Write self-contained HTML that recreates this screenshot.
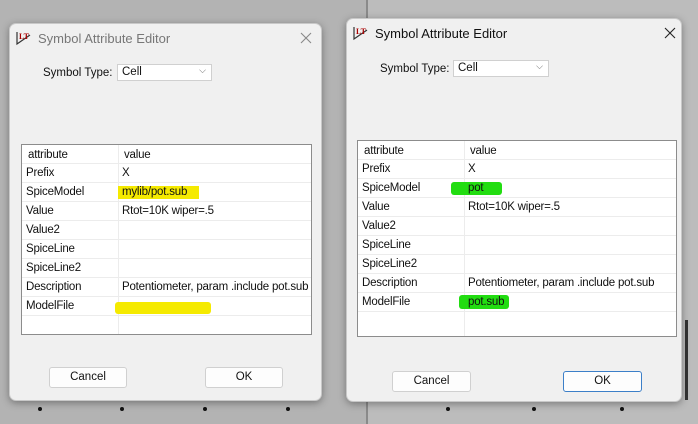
<!DOCTYPE html>
<html><head><meta charset="utf-8"><style>
*{margin:0;padding:0;box-sizing:border-box}
body{width:698px;height:424px;background:#b3b3b3;position:relative;overflow:hidden;font-family:"Liberation Sans",sans-serif;font-size:11.5px;color:#111}
.a{position:absolute}
.dlg{position:absolute;background:#f0f0f0;border-radius:7px;box-shadow:0 2px 8px rgba(0,0,0,.35);border:1px solid #c8c8c8}
.title{position:absolute;font-size:13px}
.combo{position:absolute;background:#fff;border:1px solid #d0d0d0;height:17px;font-size:11.5px;padding:1px 4px}
.tbl{position:absolute;background:#fff;border:1px solid #8c8c8c}
.row{position:absolute;left:0;right:0;height:19px;border-bottom:1px solid #ececec}
.row span{position:absolute;top:3px;white-space:nowrap;letter-spacing:-0.2px}
.btn{position:absolute;background:#fdfdfd;border:1px solid #d0d0d0;border-radius:3px;text-align:center;line-height:19px;font-size:11.5px}
.dot{position:absolute;width:4px;height:4px;background:#111;border-radius:50%}
</style></head><body>
<div class="a" style="left:366px;top:0;width:2px;height:424px;background:#8a8a8a"></div>
<div class="a" style="left:368px;top:0;width:330px;height:424px;background:#bcbcbc"></div>
<div class="a" style="left:685px;top:320px;width:3px;height:80px;background:#333"></div>

<!-- Left dialog -->
<div class="dlg" style="left:9px;top:23px;width:313px;height:378px">
  <svg class="a" style="left:6px;top:6px" width="16" height="16" viewBox="0 0 16 16"><path d="M1 2 L1 14 L14 5" fill="none" stroke="#333" stroke-width="1.2"/><text x="3" y="9" font-size="8" font-weight="bold" fill="#a00" font-family="Liberation Serif">LT</text></svg>
  <div class="title" style="left:28px;top:7px;color:#777">Symbol Attribute Editor</div>
  <svg class="a" style="left:290px;top:8px" width="12" height="12" viewBox="0 0 12 12"><path d="M1 1L11 11M11 1L1 11" stroke="#888" stroke-width="1.1"/></svg>
  <div class="a" style="left:33px;top:43px">Symbol Type:</div>
  <div class="combo" style="left:107px;top:40px;width:95px">Cell<span style="position:absolute;right:5px;top:0;color:#666;font-size:9px">⌵</span></div>
  <div class="tbl" style="left:11px;top:120px;width:291px;height:191px;overflow:hidden">
    <div class="a" style="left:96px;top:0;width:1px;height:189px;background:#ececec"></div>
    <div class="row" style="top:0"><span style="left:6px;top:4px">attribute</span><span style="left:102px;top:4px">value</span></div>
    <div class="row" style="top:19px"><span style="left:4px">Prefix</span><span style="left:100px">X</span></div>
    <div class="row" style="top:38px"><div class="a" style="left:96px;top:3px;width:81px;height:13px;background:#f5ea00"></div><span style="left:4px">SpiceModel</span><span style="left:100px">mylib/pot.sub</span></div>
    <div class="row" style="top:57px"><span style="left:4px">Value</span><span style="left:100px">Rtot=10K wiper=.5</span></div>
    <div class="row" style="top:76px"><span style="left:4px">Value2</span></div>
    <div class="row" style="top:95px"><span style="left:4px">SpiceLine</span></div>
    <div class="row" style="top:114px"><span style="left:4px">SpiceLine2</span></div>
    <div class="row" style="top:133px"><span style="left:4px">Description</span><span style="left:100px">Potentiometer, param .include pot.sub</span></div>
    <div class="row" style="top:152px"><div class="a" style="left:93px;top:5px;width:96px;height:12px;background:#f5ea00;border-radius:3px"></div><span style="left:4px">ModelFile</span></div>
  </div>
  <div class="btn" style="left:39px;top:343px;width:78px;height:21px">Cancel</div>
  <div class="btn" style="left:195px;top:343px;width:78px;height:21px">OK</div>
</div>

<!-- Right dialog -->
<div class="dlg" style="left:346px;top:18px;width:336px;height:384px">
  <svg class="a" style="left:6px;top:6px" width="16" height="16" viewBox="0 0 16 16"><path d="M1 2 L1 14 L14 5" fill="none" stroke="#333" stroke-width="1.2"/><text x="3" y="9" font-size="8" font-weight="bold" fill="#a00" font-family="Liberation Serif">LT</text></svg>
  <div class="title" style="left:28px;top:7px;color:#111">Symbol Attribute Editor</div>
  <svg class="a" style="left:317px;top:8px" width="12" height="12" viewBox="0 0 12 12"><path d="M1 1L11 11M11 1L1 11" stroke="#222" stroke-width="1.1"/></svg>
  <div class="a" style="left:33px;top:44px">Symbol Type:</div>
  <div class="combo" style="left:106px;top:41px;width:96px">Cell<span style="position:absolute;right:5px;top:0;color:#666;font-size:9px">⌵</span></div>
  <div class="tbl" style="left:10px;top:121px;width:320px;height:197px">
    <div class="a" style="left:106px;top:0;width:1px;height:195px;background:#ececec"></div>
    <div class="row" style="top:0"><span style="left:6px;top:4px">attribute</span><span style="left:112px;top:4px">value</span></div>
    <div class="row" style="top:19px"><span style="left:4px">Prefix</span><span style="left:110px">X</span></div>
    <div class="row" style="top:38px"><div class="a" style="left:93px;top:3px;width:51px;height:13px;background:#22dd11;border-radius:3px"></div><span style="left:4px">SpiceModel</span><span style="left:110px">pot</span></div>
    <div class="row" style="top:57px"><span style="left:4px">Value</span><span style="left:110px">Rtot=10K wiper=.5</span></div>
    <div class="row" style="top:76px"><span style="left:4px">Value2</span></div>
    <div class="row" style="top:95px"><span style="left:4px">SpiceLine</span></div>
    <div class="row" style="top:114px"><span style="left:4px">SpiceLine2</span></div>
    <div class="row" style="top:133px"><span style="left:4px">Description</span><span style="left:110px">Potentiometer, param .include pot.sub</span></div>
    <div class="row" style="top:152px"><div class="a" style="left:101px;top:2px;width:50px;height:14px;background:#22dd11;border-radius:3px"></div><span style="left:4px">ModelFile</span><span style="left:110px">pot.sub</span></div>
  </div>
  <div class="btn" style="left:45px;top:352px;width:79px;height:21px">Cancel</div>
  <div class="btn" style="left:216px;top:352px;width:79px;height:21px;border:1px solid #3c7fc8">OK</div>
</div>

<div class="dot" style="left:38px;top:407px"></div>
<div class="dot" style="left:120px;top:407px"></div>
<div class="dot" style="left:203px;top:407px"></div>
<div class="dot" style="left:286px;top:407px"></div>
<div class="dot" style="left:446px;top:407px"></div>
<div class="dot" style="left:532px;top:407px"></div>
<div class="dot" style="left:620px;top:407px"></div>
</body></html>
